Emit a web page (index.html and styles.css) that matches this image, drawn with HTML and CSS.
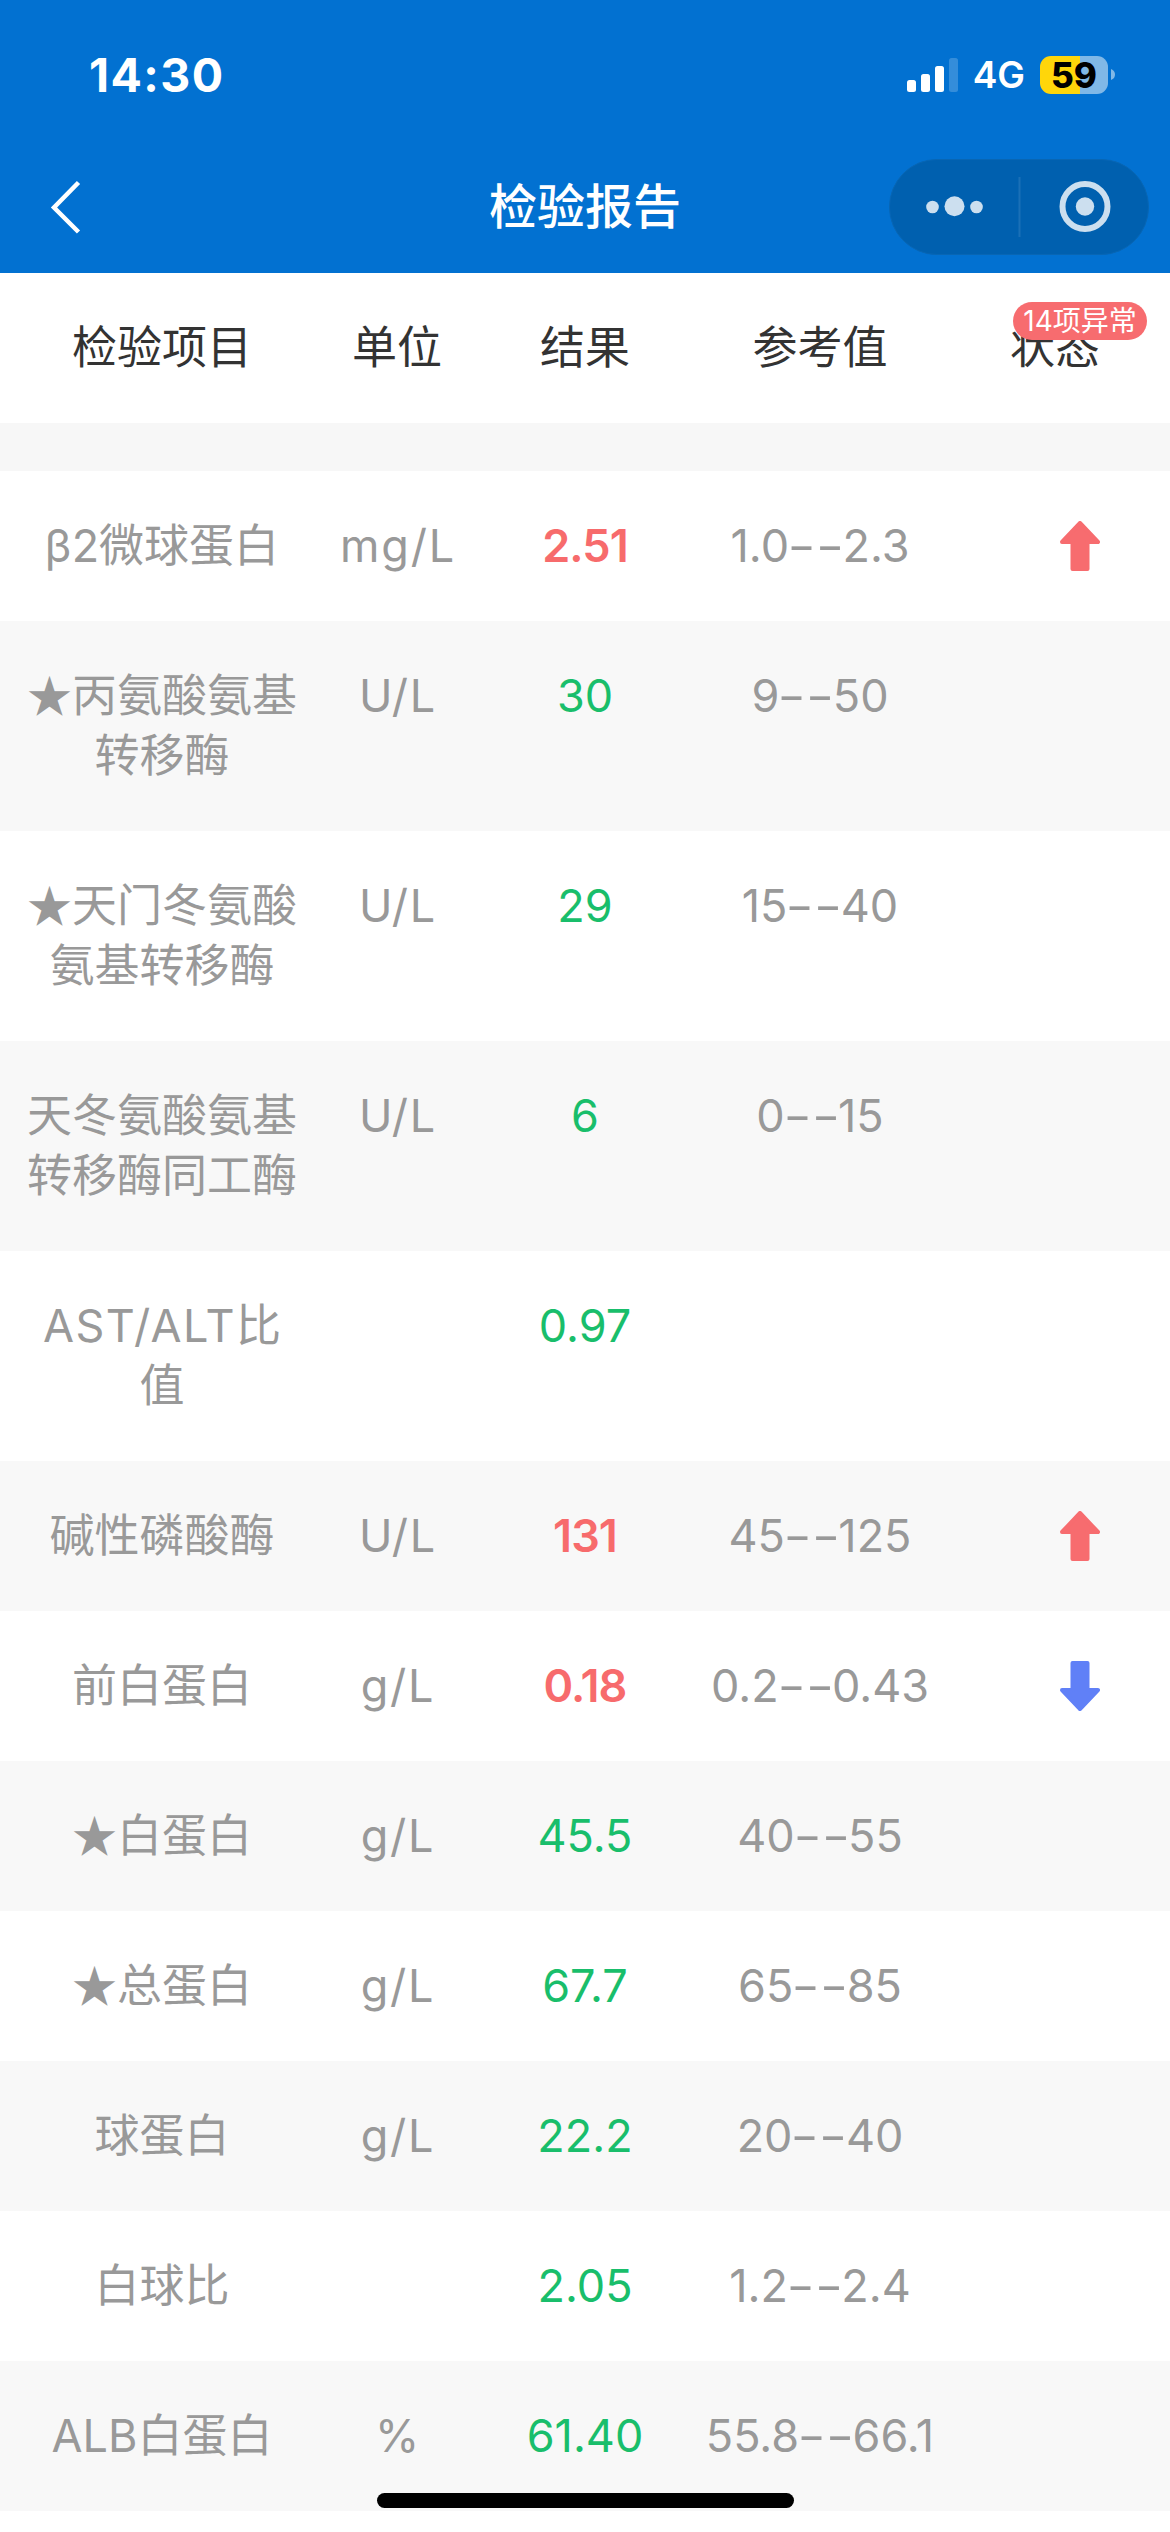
FILE: index.html
```html
<!DOCTYPE html>
<html lang="zh-CN">
<head>
<meta charset="utf-8">
<title>检验报告</title>
<link rel="stylesheet" href="styles.css">
</head>
<body>
<div class="screen">
  <header class="top">
    <div class="status-bar">
      <span class="time">14:30</span>
      <div class="indicators">
        <svg class="signal" width="51" height="34" viewBox="0 0 51 34"><g fill="#fff"><rect x="0" y="22" width="9" height="12" rx="2.5"/><rect x="14" y="16" width="9" height="18" rx="2.5"/><rect x="28" y="8" width="9" height="26" rx="2.5"/><rect x="42" y="0" width="9" height="34" rx="2.5" opacity=".2"/></g></svg>
        <span class="network">4G</span>
        <div class="battery"><span class="level">59</span></div>
        <svg class="nub" width="4" height="11" viewBox="0 0 4 11"><path d="M0 0Q4 1.500 4 5.500Q4 9.500 0 11Z" fill="#80b8e7"/></svg>
      </div>
    </div>
    <nav class="nav">
      <svg class="back" width="34" height="56" viewBox="0 0 34 56"><path d="M29.500 3.500L5 28.500L29.500 53" fill="none" stroke="#fff" stroke-width="4.500"/></svg>
      <h1 class="title">检验报告</h1>
      <svg class="capsule" width="260" height="96" viewBox="0 0 260 96"><rect x=".5" y=".5" width="259" height="95" rx="47.500" fill="#0060af" stroke="#0866b4"/><g fill="#ccdfef"><circle cx="43.500" cy="48" r="6.300"/><circle cx="65.500" cy="47.200" r="10"/><circle cx="87.500" cy="48" r="6.300"/><circle cx="196" cy="47.500" r="9.200"/></g><rect x="129.500" y="18" width="2" height="60" fill="#1a70b7"/><circle cx="196" cy="47.500" r="22.500" fill="none" stroke="#ccdfef" stroke-width="6"/></svg>
    </nav>
  </header>
  <main class="report">
    <div class="row head"><span>检验项目</span><span>单位</span><span>结果</span><span>参考值</span><span class="state">状态<em class="badge">14项异常</em></span></div>
    <div class="gap"></div>
    <div class="row"><span>β2微球蛋白</span><span class="unit">mg/L</span><span class="bad">2.51</span><span>1.0<i>--</i>2.3</span><span class="mark"><svg class="arrow up" viewBox="0 0 40 50"><path d="M20 2L38 21H27.500V48H12.500V21H2Z"/></svg></span></div>
    <div class="row alt"><span><b class="star">★</b>丙氨酸氨基转移酶</span><span class="unit">U/L</span><span class="ok">30</span><span>9<i>--</i>50</span><span></span></div>
    <div class="row"><span><b class="star">★</b>天门冬氨酸氨基转移酶</span><span class="unit">U/L</span><span class="ok">29</span><span>15<i>--</i>40</span><span></span></div>
    <div class="row alt"><span>天冬氨酸氨基转移酶同工酶</span><span class="unit">U/L</span><span class="ok">6</span><span>0<i>--</i>15</span><span></span></div>
    <div class="row"><span><b class="latin">AST/ALT</b>比值</span><span></span><span class="ok">0.97</span><span></span><span></span></div>
    <div class="row alt"><span>碱性磷酸酶</span><span class="unit">U/L</span><span class="bad">131</span><span>45<i>--</i>125</span><span class="mark"><svg class="arrow up" viewBox="0 0 40 50"><path d="M20 2L38 21H27.500V48H12.500V21H2Z"/></svg></span></div>
    <div class="row"><span>前白蛋白</span><span class="unit">g/L</span><span class="bad">0.18</span><span>0.2<i>--</i>0.43</span><span class="mark"><svg class="arrow down" viewBox="0 0 40 50"><path d="M20 48L38 29H27.500V2H12.500V29H2Z"/></svg></span></div>
    <div class="row alt"><span><b class="star">★</b>白蛋白</span><span class="unit">g/L</span><span class="ok">45.5</span><span>40<i>--</i>55</span><span></span></div>
    <div class="row"><span><b class="star">★</b>总蛋白</span><span class="unit">g/L</span><span class="ok">67.7</span><span>65<i>--</i>85</span><span></span></div>
    <div class="row alt"><span>球蛋白</span><span class="unit">g/L</span><span class="ok">22.2</span><span>20<i>--</i>40</span><span></span></div>
    <div class="row"><span>白球比</span><span></span><span class="ok">2.05</span><span>1.2<i>--</i>2.4</span><span></span></div>
    <div class="row alt"><span>ALB白蛋白</span><span>%</span><span class="ok">61.40</span><span>55.8<i>--</i>66.1</span><span></span></div>
  </main>
  <div class="home-indicator"></div>
</div>
</body>
</html>
```

FILE: styles.css
```css
* { box-sizing: border-box; }

body {
  margin: 0;
  background: #fff;
  font-family: Inter, "Noto Sans CJK SC", sans-serif;
}

.screen {
  position: relative;
  width: 1170px;
  height: 2532px;
  overflow: hidden;
}

.top {
  height: 273px;
  background: #0271d1;
  color: #fff;
}

.status-bar {
  display: flex;
  justify-content: space-between;
  align-items: center;
  height: 149px;
  padding: 0 55px 0 89px;
}

.time { font-size: 46.5px; font-weight: 700; letter-spacing: 1.4px; }

.indicators { display: flex; align-items: center; }

.network {
  margin-left: 15px;
  font-size: 37px;
  font-weight: 600;
}

.battery {
  display: flex;
  align-items: center;
  justify-content: center;
  width: 68px;
  height: 38px;
  margin-left: 15px;
  border-radius: 11px;
  background: linear-gradient(90deg, #ffd60a 40px, #80b8e7 40px);
  color: #000;
}

.level { font-size: 35px; font-weight: 800; line-height: 38px; }

.nub { margin-left: 3px; }

.nav {
  display: grid;
  grid-template-columns: 260px 1fr 260px;
  align-items: center;
  height: 115px;
  padding: 0 21px 0 21px;
}

.back { margin-left: 28px; }

.title {
  margin: 0;
  font-size: 48px;
  font-weight: 500;
  line-height: 60px;
  text-align: center;
}

.row {
  display: grid;
  grid-template-columns: 6fr 4fr 4fr 6fr 4fr;
  padding: 45px 21px;
  color: #999;
  font-size: 45px;
  line-height: 60px;
  text-align: center;
}

.row > span { padding: 0 5px; }

/* range separator, drawn wider than the font's hyphens */
.row i {
  display: inline-block;
  margin: 0 6px;
  font-style: normal;
  transform: scaleX(1.38);
}

.star {
  display: inline-block;
  width: 45px;
  font-family: "Noto Sans CJK SC", sans-serif;
  font-weight: 400;
  line-height: 56px;
  vertical-align: top;
}

.latin { font-weight: 400; letter-spacing: 1.4px; }
.row > .unit { letter-spacing: 1.8px; padding: 0 4px 0 6px; }

.head { color: #333; }
.alt { background: #f8f8f8; }
.gap { height: 48px; background: #f7f7f7; }
.ok { color: #19be6b; }
.bad { color: #f76b6c; font-weight: 600; letter-spacing: -0.9px; }

.state { position: relative; }

.badge {
  position: absolute;
  top: -16px;
  left: 52px;
  width: 134px;
  height: 38px;
  border-radius: 19px;
  background: #f76c6f;
  color: #fff;
  font-size: 28px;
  font-style: normal;
  line-height: 38px;
  white-space: nowrap;
}

.row > .mark {
  display: flex;
  align-items: center;
  justify-content: flex-end;
  padding-right: 49px;
}

.arrow {
  width: 40px;
  height: 50px;
  stroke-width: 4;
  stroke-linejoin: round;
}

.up { fill: #f76c6f; stroke: #f76c6f; }
.down { fill: #6080f7; stroke: #6080f7; }

.home-indicator {
  position: absolute;
  left: 377px;
  bottom: 24px;
  width: 417px;
  height: 15px;
  border-radius: 8px;
  background: #000;
}
```
